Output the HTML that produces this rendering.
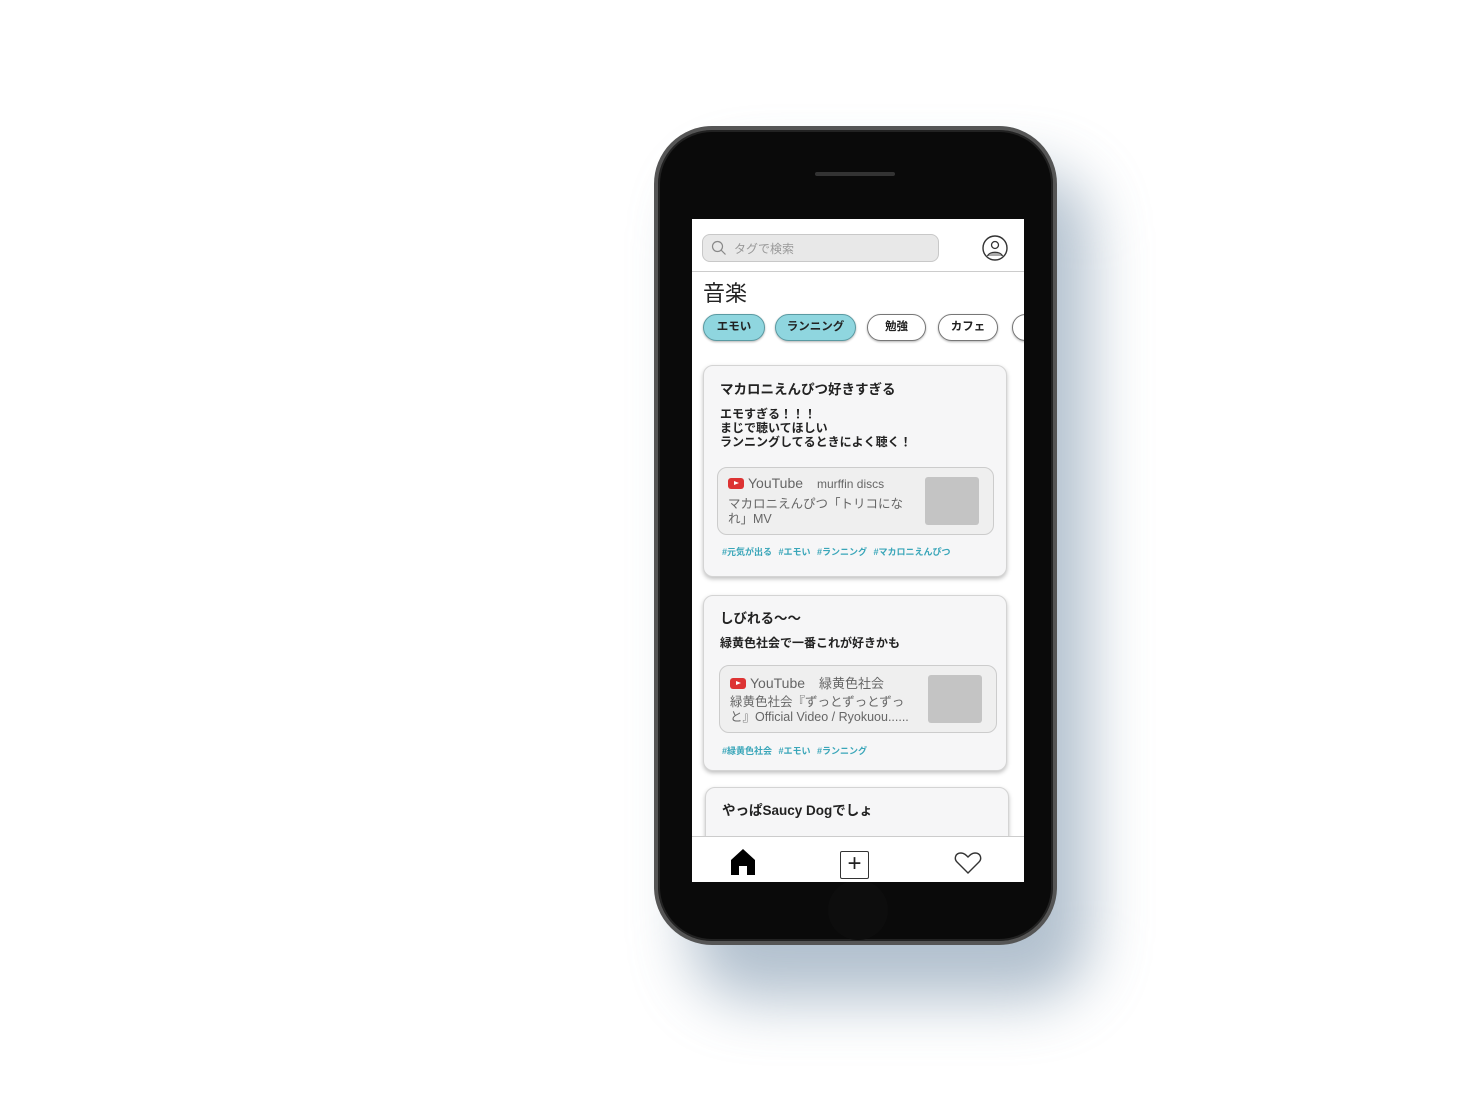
<!DOCTYPE html>
<html><head><meta charset="utf-8"><style>
*{margin:0;padding:0;box-sizing:border-box}
body{width:1479px;height:1109px;background:#fff;position:relative;overflow:hidden;font-family:"Liberation Sans","Noto Sans CJK JP",sans-serif;color:#222}
.abs{position:absolute}
.shadow{left:690px;top:170px;width:400px;height:830px;border-radius:60px;background:#7f97ae;filter:blur(30px);opacity:.6}
.phone{left:654px;top:126px;width:403px;height:819px;border-radius:58px;background:#0a0a0a;border:4px solid #555;box-shadow:inset 0 0 0 2px #222}
.screen{left:692px;top:219px;width:332px;height:663px;background:#fff;overflow:hidden}
.chip{position:absolute;top:95px;height:27px;border-radius:14px;border:1.5px solid #777;font-size:11.5px;font-weight:bold;text-align:center;line-height:24px;background:#fff;box-shadow:0 1px 2px rgba(0,0,0,.3)}
.chip.on{background:#8fd6df;border-color:#5a9aa2}
.card{position:absolute;left:11px;width:304px;background:#f6f6f7;border:1px solid #d4d4d4;border-radius:10px;box-shadow:0 2px 4px rgba(0,0,0,.25)}
.t{position:absolute;left:16px;font-size:13.5px;font-weight:bold}
.b{position:absolute;left:16px;font-size:12px;line-height:14px;color:#222;font-weight:bold}
.link{position:absolute;height:68px;border:1px solid #ccc;border-radius:10px;background:#efefef}
.yt{position:absolute;left:10px;top:7px;font-size:14px;color:#666;white-space:nowrap}
.yt i{display:inline-block;width:16px;height:11px;background:#d33;border-radius:3px;position:relative;top:1px;margin-right:4px}
.yt i:after{content:"";position:absolute;left:6px;top:3px;border-left:5px solid #fff;border-top:2.5px solid transparent;border-bottom:2.5px solid transparent}
.yt span{font-size:12px;margin-left:14px}
.lt{position:absolute;left:10px;top:29px;font-size:12.5px;line-height:15px;color:#666;width:185px}
.th{position:absolute;width:54px;height:48px;background:#c4c4c4;border-radius:3px}
.tags{position:absolute;left:18px;font-size:9px;color:#3aa6b9;white-space:nowrap;word-spacing:4px;font-weight:bold}
</style></head><body>
<div class="abs shadow"></div>
<div class="abs phone"></div>
<div class="abs" style="left:815px;top:172px;width:80px;height:4px;background:#333;border-radius:2px"></div>
<div class="abs" style="left:828px;top:880px;width:60px;height:60px;border-radius:50%;background:#0d0d0d"></div>
<div class="abs screen">
  <div class="abs" style="left:10px;top:15px;width:237px;height:28px;border-radius:8px;background:#e8e8e8;border:1px solid #c8c8c8"></div>
  <svg class="abs" style="left:19px;top:21px" width="16" height="16" viewBox="0 0 16 16"><circle cx="6.5" cy="6.5" r="5" fill="none" stroke="#888" stroke-width="1.2"/><path d="M10 10l4.5 4.5" stroke="#888" stroke-width="1.2"/></svg>
  <div class="abs" style="left:42px;top:21px;font-size:12px;color:#999">タグで検索</div>
  <svg class="abs" style="left:290px;top:16px" width="26" height="26" viewBox="0 0 26 26"><circle cx="13" cy="13" r="12" fill="#fff" stroke="#333" stroke-width="1.4"/><circle cx="13" cy="10" r="3.5" fill="#fff" stroke="#333" stroke-width="1.3"/><path d="M5.5 21c2-5 13-5 15 0" fill="#aaa" stroke="#333" stroke-width="1.3"/></svg>
  <div class="abs" style="left:0;top:52px;width:332px;height:1px;background:#ccc"></div>
  <div class="abs" style="left:11px;top:57px;font-size:22px">音楽</div>
  <div class="chip on" style="left:11px;width:62px">エモい</div>
  <div class="chip on" style="left:83px;width:81px">ランニング</div>
  <div class="chip" style="left:175px;width:59px">勉強</div>
  <div class="chip" style="left:246px;width:60px">カフェ</div>
  <div class="chip" style="left:320px;width:40px"></div>

  <div class="card" style="top:146px;height:212px">
    <div class="t" style="top:12px">マカロニえんぴつ好きすぎる</div>
    <div class="b" style="top:41px">エモすぎる！！！<br>まじで聴いてほしい<br>ランニングしてるときによく聴く！</div>
    <div class="link" style="left:13px;top:101px;width:277px">
      <div class="yt"><i></i>YouTube<span>murffin discs</span></div>
      <div class="lt">マカロニえんぴつ「トリコにな れ」MV</div>
      <div class="th" style="left:207px;top:9px"></div>
    </div>
    <div class="tags" style="top:179px">#元気が出る #エモい #ランニング #マカロニえんぴつ</div>
  </div>

  <div class="card" style="top:376px;height:176px">
    <div class="t" style="top:11px">しびれる〜〜</div>
    <div class="b" style="top:40px">緑黄色社会で一番これが好きかも</div>
    <div class="link" style="left:15px;top:69px;width:278px">
      <div class="yt"><i></i>YouTube<span style="font-size:13px">緑黄色社会</span></div>
      <div class="lt">緑黄色社会『ずっとずっとずっ と』Official Video / Ryokuou......</div>
      <div class="th" style="left:208px;top:9px"></div>
    </div>
    <div class="tags" style="top:148px">#緑黄色社会 #エモい #ランニング</div>
  </div>

  <div class="card" style="top:568px;left:13px;height:90px">
    <div class="t" style="top:11px">やっぱSaucy Dogでしょ</div>
  </div>

  <div class="abs" style="left:0;top:617px;width:332px;height:46px;background:#fff;border-top:1px solid #ccc"></div>
  <svg class="abs" style="left:38px;top:629px" width="26" height="27" viewBox="0 0 26 27"><path d="M13 1L1 12v15h8v-9h8v9h8V12z" fill="#000"/></svg>
  <div class="abs" style="left:148px;top:632px;width:29px;height:28px;border:1.5px solid #333;border-radius:2px;font-size:24px;line-height:24px;text-align:center">+</div>
  <svg class="abs" style="left:262px;top:632px" width="28" height="24" viewBox="0 0 28 24"><path d="M14 22L3 11C0 8 1 2 7 2c3 0 5 2 7 4 2-2 4-4 7-4 6 0 7 6 4 9z" fill="none" stroke="#333" stroke-width="1.4"/></svg>
</div>
</body></html>
